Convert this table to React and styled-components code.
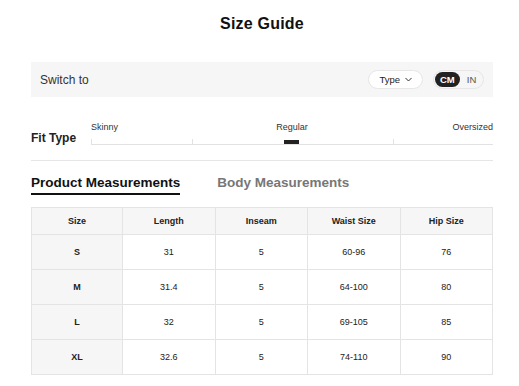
import React, { useState } from "react";
import styled, { createGlobalStyle } from "styled-components";

const GlobalStyle = createGlobalStyle`
  body {
    margin: 0;
    background: #fff;
    font-family: "Liberation Sans", Arial, sans-serif;
    color: #222;
  }
`;

const Page = styled.div`
  width: 462px;
  margin-left: 31px;
  padding-top: 14px;
`;

const Title = styled.h1`
  margin: 0;
  text-align: center;
  font-size: 16px;
  font-weight: 900;
  letter-spacing: 0.2px;
  color: #111;
  line-height: 20px;
`;

const SwitchBar = styled.div`
  margin-top: 28px;
  height: 35px;
  background: #f6f6f6;
  display: flex;
  align-items: center;
  padding: 0 9px;
  gap: 10px;
`;

const SwitchLabel = styled.span`
  font-size: 12px;
  color: #333;
  flex: 1;
`;

const TypeButton = styled.button`
  height: 19px;
  padding: 0 10px;
  border: 1px solid #e6e6e6;
  border-radius: 10px;
  background: #fff;
  font-family: inherit;
  font-size: 9.5px;
  color: #222;
  display: flex;
  align-items: center;
  gap: 5px;
  cursor: pointer;
`;

const UnitToggle = styled.div`
  height: 19px;
  border: 1px solid #e6e6e6;
  border-radius: 10px;
  display: flex;
  align-items: center;
  padding: 0 1px;
  width: 51px;
  box-sizing: border-box;
`;

const Unit = styled.span`
  height: 15px;
  line-height: 15px;
  padding: 0 5px;
  border-radius: 8px;
  font-size: 9.5px;
  font-weight: ${(p) => (p.$active ? 700 : 400)};
  background: ${(p) => (p.$active ? "#222" : "transparent")};
  color: ${(p) => (p.$active ? "#fff" : "#555")};
  cursor: pointer;
  & + & {
    margin-left: 2px;
  }
`;

const FitRow = styled.div`
  margin-top: 25px;
  display: flex;
  align-items: flex-end;
  padding-bottom: 15px;
  border-bottom: 1px solid #e6e6e6;
`;

const FitLabel = styled.span`
  font-size: 12px;
  font-weight: 700;
  color: #222;
  width: 60px;
  line-height: 14px;
  margin-bottom: 0;
`;

const Scale = styled.div`
  flex: 1;
`;

const ScaleLabels = styled.div`
  display: grid;
  grid-template-columns: 1fr auto 1fr;
  font-size: 9px;
  color: #333;
  line-height: 11px;
  & > span:last-child {
    justify-self: end;
  }
`;

const Track = styled.div`
  position: relative;
  margin-top: 6px;
  height: 5px;
  border-bottom: 1px solid #e2e2e2;
  display: grid;
  grid-template-columns: 1fr 2fr 1fr;
`;

const Segment = styled.div`
  border-left: 1px solid #e2e2e2;
  &:last-child {
    border-right: 1px solid #e2e2e2;
  }
`;

const Thumb = styled.div`
  position: absolute;
  left: 50%;
  bottom: 0;
  width: 15px;
  height: 4px;
  margin-left: -8px;
  background: #222;
`;

const Tabs = styled.div`
  margin-top: 14px;
  display: flex;
  gap: 37px;
`;

const Tab = styled.button`
  border: 0;
  background: none;
  padding: 0 0 3px;
  font-family: inherit;
  font-size: 13.5px;
  font-weight: 700;
  color: ${(p) => (p.$active ? "#111" : "#777")};
  border-bottom: 2px solid ${(p) => (p.$active ? "#111" : "transparent")};
  cursor: pointer;
`;

const Table = styled.table`
  margin-top: 12px;
  width: 100%;
  border-collapse: collapse;
  font-size: 9px;
  color: #222;
  table-layout: fixed;
`;

const Th = styled.th`
  height: 26px;
  border: 1px solid #e4e4e4;
  background: #f6f6f6;
  font-weight: 700;
  padding: 0;
`;

const Td = styled.td`
  height: 34px;
  border: 1px solid #e4e4e4;
  text-align: center;
  padding: 0;
  font-weight: ${(p) => (p.$head ? 700 : 400)};
  background: ${(p) => (p.$head ? "#f6f6f6" : "#fff")};
`;

const Chevron = () => (
  <svg width="7" height="5" viewBox="0 0 7 5" fill="none">
    <path d="M0.5 1L3.5 4L6.5 1" stroke="#333" strokeWidth="1" />
  </svg>
);

const columns = ["Size", "Length", "Inseam", "Waist Size", "Hip Size"];
const rows = [
  ["S", "31", "5", "60-96", "76"],
  ["M", "31.4", "5", "64-100", "80"],
  ["L", "32", "5", "69-105", "85"],
  ["XL", "32.6", "5", "74-110", "90"],
];

export default function App() {
  const [unit, setUnit] = useState("CM");
  const [tab, setTab] = useState("product");

  return (
    <>
      <GlobalStyle />
      <Page>
        <Title>Size Guide</Title>

        <SwitchBar>
          <SwitchLabel>Switch to</SwitchLabel>
          <TypeButton>
            Type <Chevron />
          </TypeButton>
          <UnitToggle>
            <Unit $active={unit === "CM"} onClick={() => setUnit("CM")}>
              CM
            </Unit>
            <Unit $active={unit === "IN"} onClick={() => setUnit("IN")}>
              IN
            </Unit>
          </UnitToggle>
        </SwitchBar>

        <FitRow>
          <FitLabel>Fit Type</FitLabel>
          <Scale>
            <ScaleLabels>
              <span>Skinny</span>
              <span>Regular</span>
              <span>Oversized</span>
            </ScaleLabels>
            <Track>
              <Segment />
              <Segment />
              <Segment />
              <Thumb />
            </Track>
          </Scale>
        </FitRow>

        <Tabs>
          <Tab $active={tab === "product"} onClick={() => setTab("product")}>
            Product Measurements
          </Tab>
          <Tab $active={tab === "body"} onClick={() => setTab("body")}>
            Body Measurements
          </Tab>
        </Tabs>

        <Table>
          <colgroup>
            <col style={{ width: "91px" }} />
          </colgroup>
          <thead>
            <tr>
              {columns.map((c) => (
                <Th key={c}>{c}</Th>
              ))}
            </tr>
          </thead>
          <tbody>
            {rows.map((r) => (
              <tr key={r[0]}>
                {r.map((v, i) => (
                  <Td key={i} $head={i === 0}>
                    {v}
                  </Td>
                ))}
              </tr>
            ))}
          </tbody>
        </Table>
      </Page>
    </>
  );
}
